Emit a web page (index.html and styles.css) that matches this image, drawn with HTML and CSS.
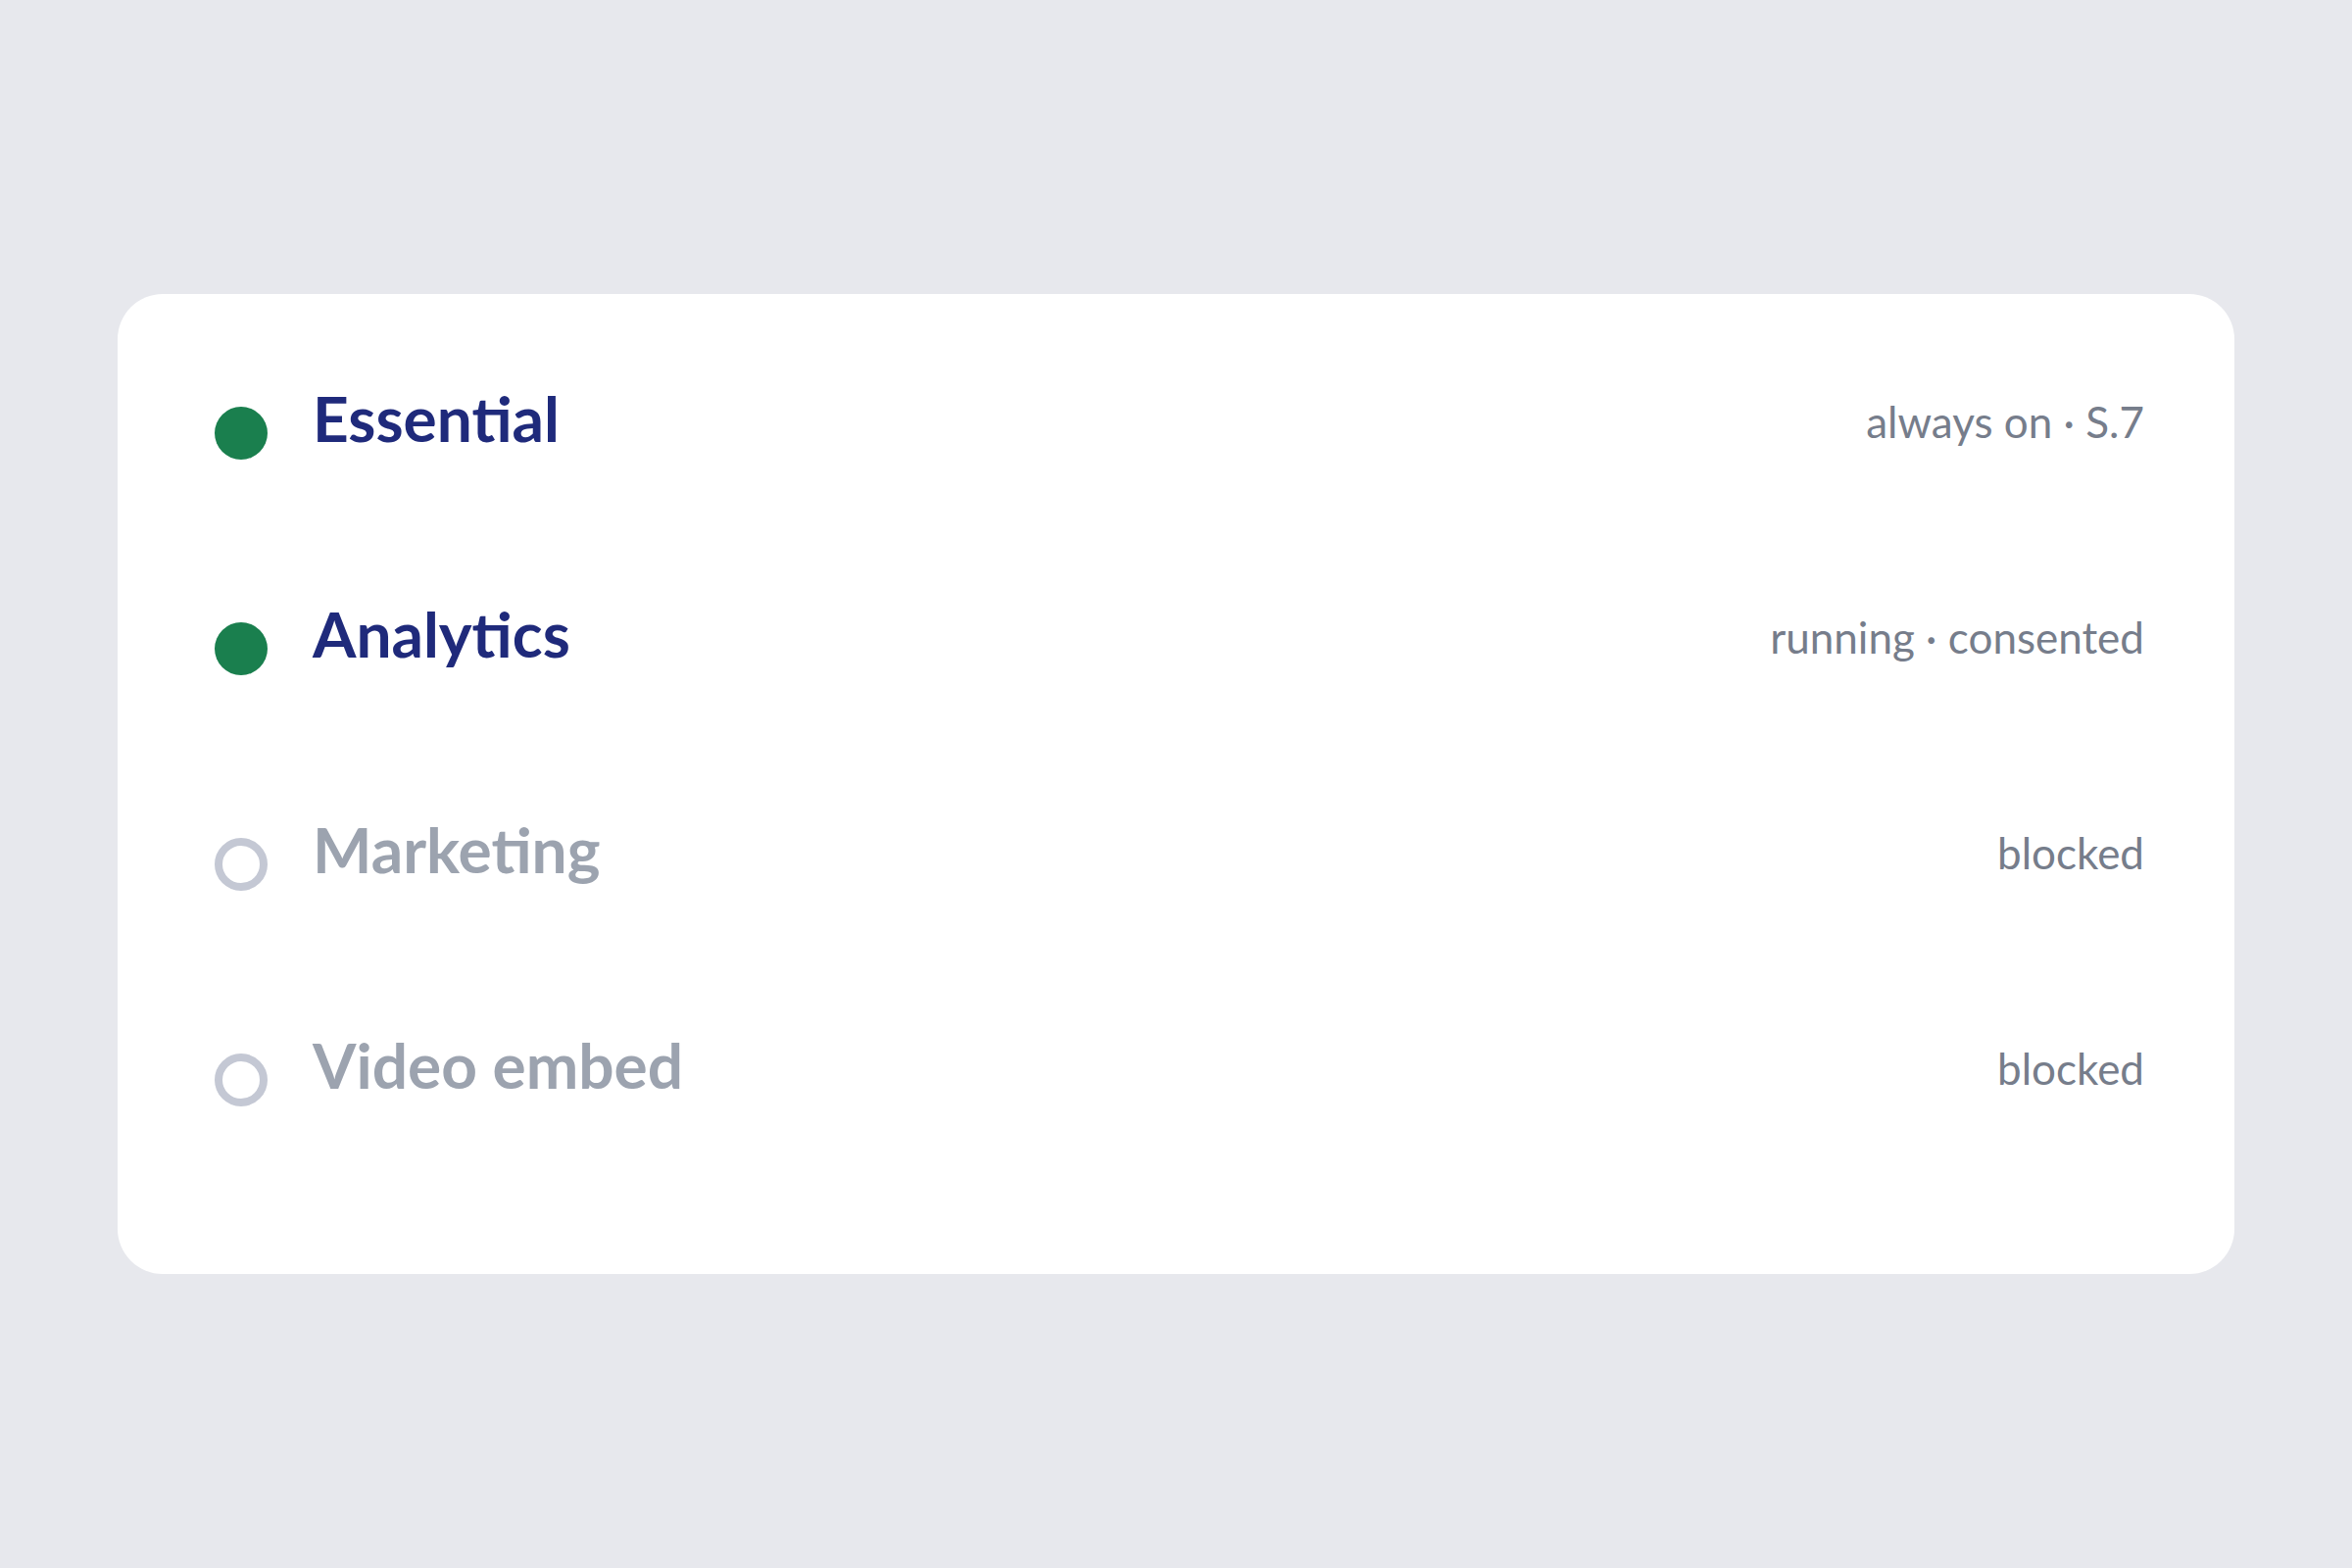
FILE: index.html
```html
<!DOCTYPE html>
<html lang="en">

<head>
    <meta charset="UTF-8">
    <meta name="viewport" content="width=device-width, initial-scale=1.0">
    <title>Cookie categories</title>
    <link rel="stylesheet" href="styles.css">
</head>

<body>
    <div class="card">
        <ul class="categories">
            <li class="category on">
                <span class="dot"></span>
                <span class="name">Essential</span>
                <span class="status">always on · S.7</span>
            </li>
            <li class="category on">
                <span class="dot"></span>
                <span class="name">Analytics</span>
                <span class="status">running · consented</span>
            </li>
            <li class="category off">
                <span class="dot"></span>
                <span class="name">Marketing</span>
                <span class="status">blocked</span>
            </li>
            <li class="category off">
                <span class="dot"></span>
                <span class="name">Video embed</span>
                <span class="status">blocked</span>
            </li>
        </ul>
    </div>
</body>

</html>
```

FILE: styles.css
```css
body {
    margin: 0;
    background-color: #e7e8ed;
    font-family: Lato, "Open Sans", sans-serif;
}

.card {
    box-sizing: border-box;
    width: 2160px;
    height: 1000px;
    margin: 300px 0 0 120px;
    padding: 89px 92px 0 99px;
    background-color: #ffffff;
    border-radius: 46px;
}

.categories {
    list-style-type: none;
    margin: 0;
    padding: 0;
    display: flex;
    flex-direction: column;
    gap: 144px;
}

.category {
    display: flex;
    align-items: center;
    height: 76px;
}

.dot {
    box-sizing: border-box;
    width: 54px;
    height: 54px;
    border-radius: 50%;
    margin-top: 29px;
    flex-shrink: 0;
}

.on .dot {
    background-color: #1a7f4e;
}

.off .dot {
    border: 8px solid #c4c8d4;
}

.name {
    margin-left: 46px;
    font-size: 64px;
    font-weight: 700;
    line-height: 76px;
}

.on .name {
    color: #1f2a7b;
}

.off .name {
    color: #9ca3af;
}

.status {
    margin-left: auto;
    font-size: 44px;
    line-height: 52px;
    margin-top: 6px;
    color: #767d8b;
}
```
